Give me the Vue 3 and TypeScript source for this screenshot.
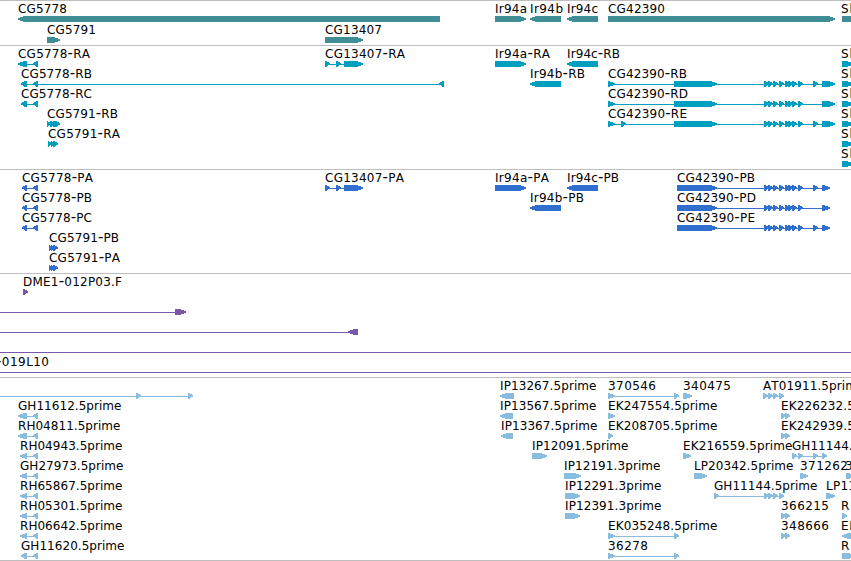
<script setup lang="ts">
type Block = [start: number, end: number]

interface Feature {
	row: number
	label?: string
	labelX?: number
	reverse?: boolean
	blocks: Block[]
	line?: Block
}

interface Track {
	name: string
	height: number
	pitch: number
	features: Feature[]
}

const BAR_TOP = 16
const LABEL_BASELINE = 13

// how far each pixel row of an arrow stays behind its tip
const LONG_TIP = [5, 2, 0, 0, 2, 5]
const SHORT_TIP = [3, 1, 0, 0, 2, 3]

// whole-pixel glyph advances, digits and most capitals take 8
const ADVANCES: Record<string, number> = {
	G: 9, H: 9, D: 9, M: 10, A: 9, I: 4, P: 7, F: 7, T: 7, L: 7,
	a: 7, c: 6, e: 7, p: 8, r: 5, i: 3, m: 10.5, ".": 4, "-": 6,
}

function fwd(row: number, label: string, ...blocks: Block[]): Feature {
	return { row, label, blocks }
}

function rev(row: number, label: string, ...blocks: Block[]): Feature {
	return { row, label, blocks, reverse: true }
}

const exons: Block[] = [764, 768, 773, 779, 785, 788, 792, 798].map((x) => [x, x + 5])
const smallExon: Block = [813, 818]
const lastExons: Block[] = exons.slice(0, 4)
const cg13407: Block[] = [[325, 330], [336, 341], [344, 363]]
const pair: Block[] = [[781, 786], [785, 790]]

const tracks: Track[] = [
	{
		name: "gene",
		height: 45,
		pitch: 21,
		features: [
			rev(0, "CG5778", [18, 440]),
			fwd(1, "CG5791", [47, 60]),
			fwd(1, "CG13407", [325, 363]),
			fwd(0, "Ir94a", [495, 526]),
			rev(0, "Ir94b", [530, 561]),
			rev(0, "Ir94c", [567, 598]),
			fwd(0, "CG42390", [608, 835]),
			{ row: 0, label: "Sh", labelX: 841, blocks: [[842, 900]] },
		],
	},
	{
		name: "transcript",
		height: 124,
		pitch: 20,
		features: [
			rev(0, "CG5778-RA", [18, 27], [33, 38]),
			rev(1, "CG5778-RB", [21, 27], [33, 38], [439, 444]),
			rev(2, "CG5778-RC", [21, 27], [33, 38]),
			fwd(3, "CG5791-RB", [47, 51], [50, 55], [53, 58], [55, 60]),
			fwd(4, "CG5791-RA", [48, 52], [51, 55], [53, 58]),
			fwd(0, "CG13407-RA", ...cg13407),
			fwd(0, "Ir94a-RA", [495, 526]),
			rev(1, "Ir94b-RB", [530, 561]),
			rev(0, "Ir94c-RB", [567, 598]),
			fwd(1, "CG42390-RB", [608, 615], [674, 717], ...exons, smallExon, [822, 835]),
			fwd(2, "CG42390-RD", [608, 615], [674, 717], ...exons, [822, 835]),
			fwd(3, "CG42390-RE", [608, 615], [621, 626], [674, 717], ...exons, smallExon, [822, 835]),
			...[0, 1, 2, 3, 4, 5].map((row): Feature => ({
				row,
				label: "Sh",
				labelX: 841,
				blocks: [[842, 853]],
			})),
		],
	},
	{
		name: "protein",
		height: 104,
		pitch: 20,
		features: [
			rev(0, "CG5778-PA", [22, 27], [33, 38]),
			rev(1, "CG5778-PB", [22, 27], [33, 38]),
			rev(2, "CG5778-PC", [22, 27], [33, 38]),
			fwd(3, "CG5791-PB", [49, 53], [51, 55], [53, 58]),
			fwd(4, "CG5791-PA", [49, 53], [51, 55], [53, 58]),
			fwd(0, "CG13407-PA", ...cg13407),
			fwd(0, "Ir94a-PA", [495, 526]),
			rev(1, "Ir94b-PB", [530, 561]),
			rev(0, "Ir94c-PB", [567, 598]),
			fwd(0, "CG42390-PB", [677, 717], ...exons, smallExon, [822, 830]),
			fwd(1, "CG42390-PD", [677, 717], ...exons, [822, 830]),
			fwd(2, "CG42390-PE", [677, 717], ...exons, smallExon, [822, 830]),
		],
	},
	{
		name: "bac",
		height: 104,
		pitch: 20,
		features: [
			fwd(0, "DME1-012P03.F", [23, 28]),
			{ row: 1, blocks: [[175, 186]], line: [-10, 176] },
			{ row: 2, reverse: true, blocks: [[348, 358]], line: [-10, 350] },
			{ row: 3, blocks: [], line: [-10, 860] },
			{ row: 4, label: "-019L10", labelX: -4, blocks: [], line: [-10, 860] },
		],
	},
	{
		name: "est",
		height: 184,
		pitch: 20,
		features: [
			{ row: 0, blocks: [[136, 141], [188, 193]], line: [-10, 190] },
			rev(1, "GH11612.5prime", [18, 27], [33, 38]),
			rev(2, "RH04811.5prime", [18, 27], [33, 38]),
			rev(3, "RH04943.5prime", [20, 27], [33, 38]),
			rev(4, "GH27973.5prime", [20, 27], [33, 38]),
			rev(5, "RH65867.5prime", [20, 27], [33, 38]),
			rev(6, "RH05301.5prime", [20, 27], [33, 38]),
			rev(7, "RH06642.5prime", [20, 27], [33, 38]),
			rev(8, "GH11620.5prime", [21, 27], [33, 38]),
			rev(0, "IP13267.5prime", [500, 514]),
			rev(1, "IP13567.5prime", [500, 513]),
			rev(2, "IP13367.5prime", [501, 513]),
			fwd(3, "IP12091.5prime", [532, 547]),
			fwd(4, "IP12191.3prime", [564, 581]),
			fwd(5, "IP12291.3prime", [565, 580]),
			fwd(6, "IP12391.3prime", [565, 580]),
			fwd(0, "370546", [608, 615], [674, 679]),
			fwd(1, "EK247554.5prime", [608, 615]),
			fwd(2, "EK208705.5prime", [608, 613]),
			fwd(7, "EK035248.5prime", [608, 615], [674, 679]),
			fwd(8, "36278", [608, 615], [674, 679]),
			fwd(0, "340475", [683, 692]),
			fwd(3, "EK216559.5prime", [683, 691]),
			fwd(4, "LP20342.5prime", [694, 707]),
			fwd(5, "GH11144.5prime", [714, 719], ...lastExons),
			fwd(0, "AT01911.5prime", [763, 768], ...lastExons.slice(1)),
			fwd(1, "EK226232.5prime", ...pair),
			fwd(2, "EK242939.5prime", ...pair),
			fwd(3, "GH11144.3prime", [792, 797], [798, 803], smallExon, [822, 827]),
			fwd(4, "371262", [800, 808]),
			{ row: 4, label: "3", labelX: 845, blocks: [[846, 855]] },
			fwd(5, "LP11", [826, 835]),
			fwd(6, "366215", ...pair),
			fwd(7, "348666", ...pair),
			{ row: 6, label: "R", labelX: 841, blocks: [[842, 847]] },
			{ row: 7, label: "EK", labelX: 841, reverse: true, blocks: [[842, 870]] },
			{ row: 8, label: "R", labelX: 841, blocks: [[842, 855]] },
		],
	},
]

function barTop(track: Track, feature: Feature) {
	return BAR_TOP + feature.row * track.pitch
}

function labelX(feature: Feature) {
	return feature.labelX ?? feature.blocks[0][0]
}

function labelY(track: Track, feature: Feature) {
	return LABEL_BASELINE + feature.row * track.pitch
}

function labelLength(label: string) {
	return [...label].reduce((sum, char) => sum + (ADVANCES[char] ?? 8), 0)
}

// keeps the hyphen as its own part so it can be drawn wider
function labelParts(label: string) {
	return label.split(/(-)/).filter((part) => part !== "")
}

// thin connector running behind the blocks
function connector(feature: Feature): Block | null {
	if (feature.line) return feature.line
	if (feature.blocks.length < 2) return null
	return [feature.blocks[0][0] + 2, feature.blocks[feature.blocks.length - 1][1] - 2]
}

function arrow([start, end]: Block, top: number, reverse = false) {
	const width = end - start
	const insets = width > 6 ? LONG_TIP : SHORT_TIP

	return insets
		.map((inset, row) => {
			const length = Math.max(width - inset, 1)
			const x = reverse ? end - length : start
			return `M${x} ${top + row}h${length}v1h${-length}z`
		})
		.join("")
}
</script>

<template>
	<main class="browser">
		<section v-for="track in tracks" :key="track.name" class="track" :class="track.name">
			<svg class="canvas" width="851" :height="track.height - 1" :viewBox="`0 1 851 ${track.height - 1}`">
				<g v-for="(feature, i) in track.features" :key="i">
					<rect
						v-if="connector(feature)"
						class="shape"
						:x="connector(feature)![0]"
						:y="barTop(track, feature) + 3"
						:width="connector(feature)![1] - connector(feature)![0]"
						height="1"
					/>
					<path
						v-for="(block, j) in feature.blocks"
						:key="j"
						class="shape"
						:d="arrow(block, barTop(track, feature), feature.reverse)"
					/>
					<text
						v-if="feature.label"
						class="label"
						:x="labelX(feature)"
						:y="labelY(track, feature)"
						:textLength="labelLength(feature.label)"
					><tspan v-for="(part, k) in labelParts(feature.label)" :key="k" :class="{ dash: part === '-' }">{{ part }}</tspan></text>
				</g>
			</svg>
		</section>
	</main>
</template>

<style>
body {
	background-color: #fff;
	overflow: hidden;
}
</style>

<style scoped>
.browser {
	display: flex;
	flex-direction: column;
	width: 851px;
	border-bottom: 1px solid #bebebe;
	box-sizing: border-box;
	height: 561px;
	overflow: hidden;
}

.track {
	flex: none;
	border-top: 1px solid #bebebe;
}

.track.est {
	flex: 1;
	min-height: 0;
}

.canvas {
	display: block;
}

.shape {
	shape-rendering: crispEdges;
}

.label {
	font-family: "DejaVu Sans", sans-serif;
	font-size: 12px;
	font-kerning: none;
	fill: #000;
}

.dash {
	font-size: 15px;
}

.gene .shape {
	fill: #408e95;
}

.transcript .shape {
	fill: #009fc0;
}

.protein .shape {
	fill: #316fce;
}

.bac .shape {
	fill: #7759a8;
}

.est .shape {
	fill: #88bde0;
}
</style>
